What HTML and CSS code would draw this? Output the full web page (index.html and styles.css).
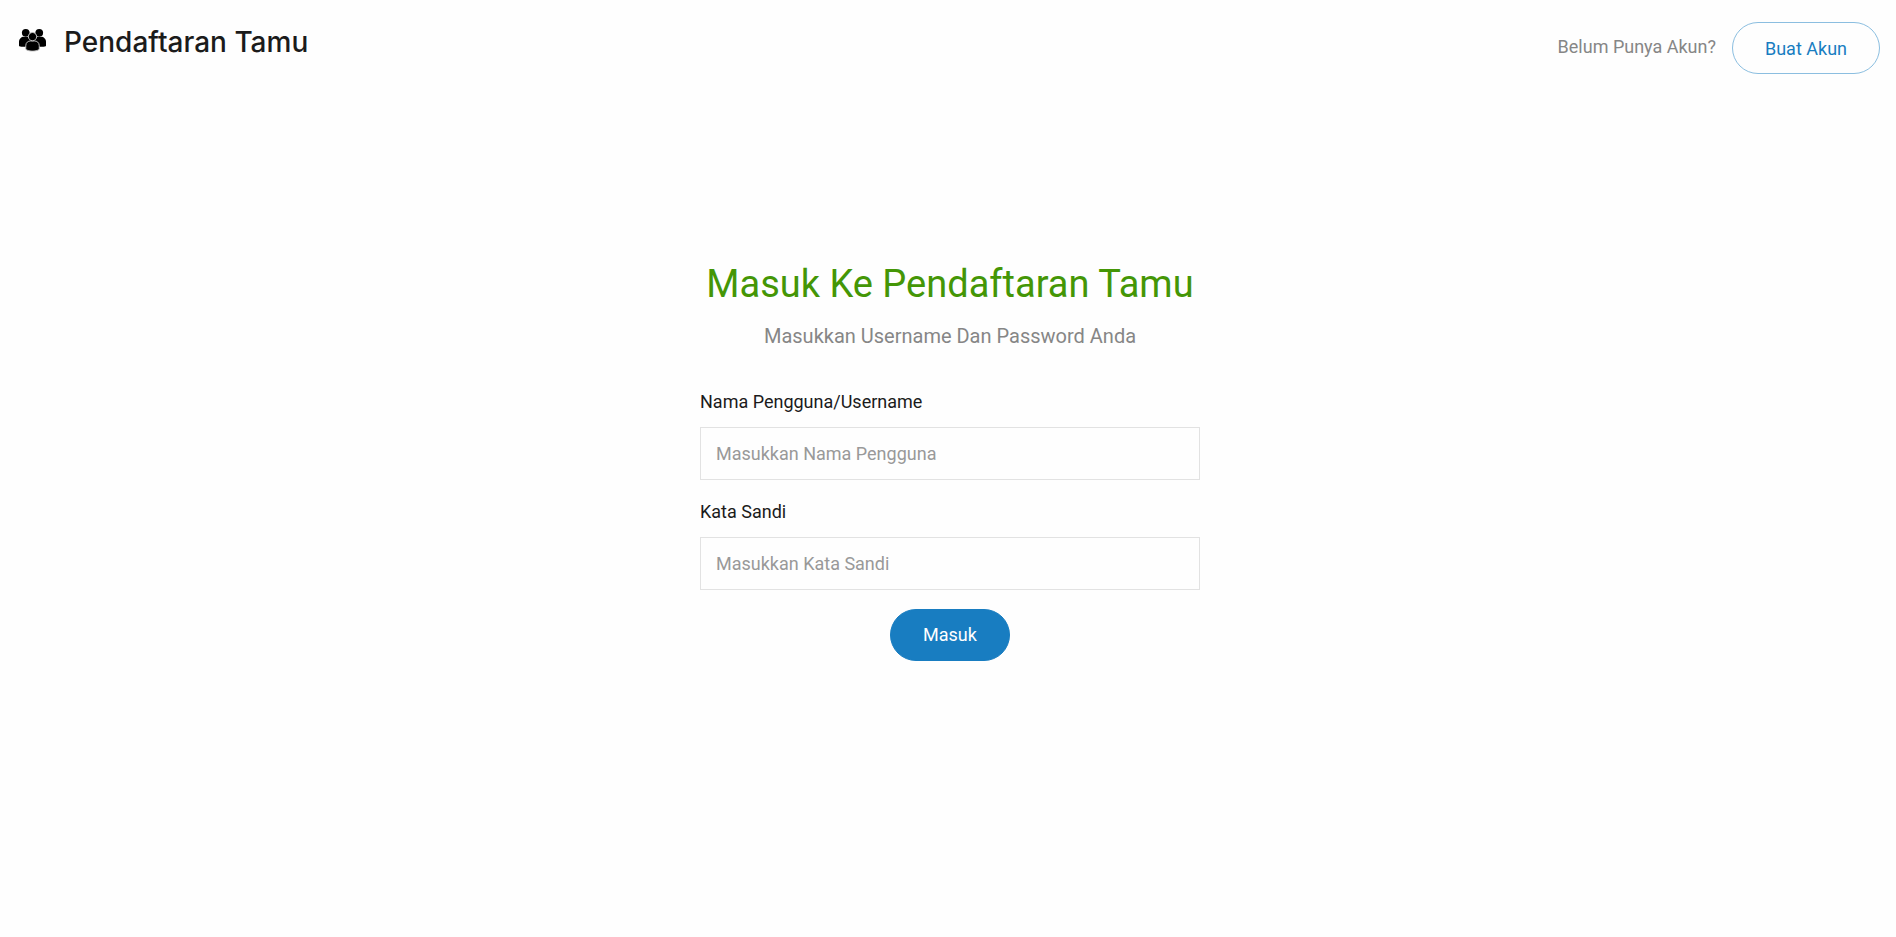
FILE: index.html
```html
<!DOCTYPE html>
<html lang="id">
<head>
<meta charset="utf-8">
<title>Pendaftaran Tamu</title>
<link rel="stylesheet" href="styles.css">
</head>
<body>
<header class="topbar">
  <a class="brand" href="#">
    <svg class="brand-icon" viewBox="0 0 28 24" aria-hidden="true">
      <circle cx="7" cy="4.500" r="4"/>
      <circle cx="21" cy="4.500" r="4"/>
      <path d="M0 18v-4c0-3.500 2.500-5.500 5-5.500h4c3 0 4 2 4 5V19H4c-2 0-4 0-4-1z"/>
      <path d="M28 18v-4c0-3.500-2.500-5.500-5-5.500h-4c-3 0-4 2-4 5V19h9c2 0 4 0 4-1z"/>
      <path class="front" d="M7 21v-3c0-3.500 2.500-5 5-5h4c2.500 0 5 1.500 5 5v3c0 1.500-3.500 2.500-7 2.500S7 22.500 7 21z"/>
      <circle class="front" cx="14" cy="8.500" r="4.300"/>
    </svg>
    <span class="brand-name">Pendaftaran Tamu</span>
  </a>
  <div class="account">
    <span class="account-text">Belum Punya Akun?</span>
    <a class="button button-outline" href="#">Buat Akun</a>
  </div>
</header>
<main class="login">
  <h1 class="title">Masuk Ke Pendaftaran Tamu</h1>
  <p class="subtitle">Masukkan Username Dan Password Anda</p>
  <form class="form">
    <label class="label" for="username">Nama Pengguna/Username</label>
    <input class="input" id="username" type="text" placeholder="Masukkan Nama Pengguna">
    <label class="label" for="password">Kata Sandi</label>
    <input class="input" id="password" type="password" placeholder="Masukkan Kata Sandi">
    <button class="button button-solid" type="button">Masuk</button>
  </form>
</main>
</body>
</html>
```
FILE: styles.css
```css
* {
  box-sizing: border-box;
}

body {
  margin: 0;
  background: #fefefe;
  color: #1b1b1b;
  font: 18px/24px Roboto, sans-serif;
}

.topbar {
  display: flex;
  justify-content: space-between;
  align-items: flex-start;
  padding: 22px 16px 0 19px;
}

.brand {
  display: flex;
  align-items: center;
  gap: 18px;
  padding-top: 2px;
  color: inherit;
  text-decoration: none;
}

.brand-icon {
  width: 27px;
  height: 24px;
  margin-bottom: 5px;
  fill: #000;
}

.brand-icon .front {
  stroke: #c4c4c4;
  stroke-width: 1;
}

.brand-name {
  font: 500 28px/36px Inter, sans-serif;
}

.account {
  display: flex;
  align-items: center;
  gap: 16px;
}

.account-text {
  padding-bottom: 2px;
  color: #868686;
}

.button {
  height: 52px;
  padding: 0 32px;
  border: 1px solid #187dc1;
  border-radius: 26px;
  font: 18px/50px Roboto, sans-serif;
  text-decoration: none;
}

.button-outline {
  padding-top: 1px;
  border-color: #8bbee0;
  color: #187dc1;
}

.button-solid {
  align-self: center;
  background: #187dc1;
  color: #fff;
}

.login {
  width: 100%;
  max-width: 504px;
  margin: 0 auto;
  padding: 185px 0 0 4px;
  text-align: center;
}

.title {
  margin: 0 0 15px;
  color: #449606;
  font-size: 38px;
  font-weight: 400;
  line-height: 50px;
  white-space: nowrap;
}

.subtitle {
  margin: 0 0 42px;
  color: #868686;
  font-size: 20px;
}

.form {
  display: flex;
  flex-direction: column;
}

.label {
  margin-bottom: 13px;
  text-align: left;
}

.input {
  width: 100%;
  height: 53px;
  margin-bottom: 20px;
  padding: 0 15px;
  border: 1px solid #e2e2e2;
  border-radius: 0;
  background: #fefefe;
  color: #1b1b1b;
  font: inherit;
}

#password {
  margin-bottom: 19px;
}

.input::placeholder {
  color: #999;
}
```
